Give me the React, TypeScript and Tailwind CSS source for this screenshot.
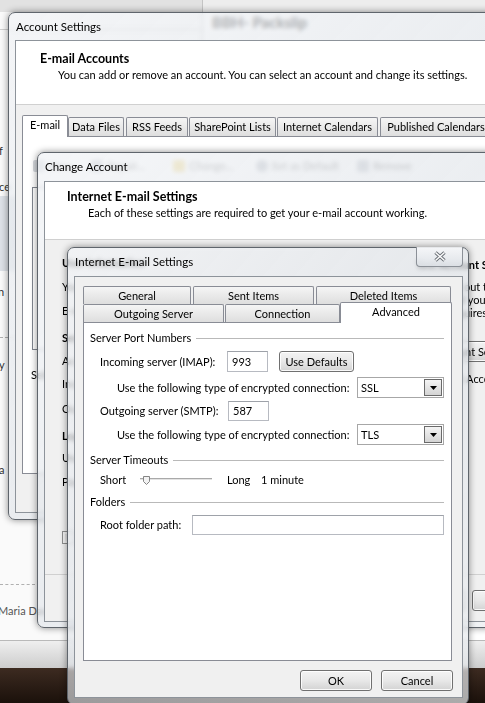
import React from "react"

type Kids = { children?: React.ReactNode }

function WinButton({ label, className = "" }: { label: string; className?: string }) {
  return (
    <div
      className={`flex shrink-0 items-center whitespace-nowrap rounded-[3px] border border-[#707070] bg-linear-to-b from-[#f3f3f3] via-[#e8e8e8] to-[#d3d3d3] shadow-[inset_0_0_0_1px_rgba(255,255,255,0.85)] ${className}`}
    >
      {label}
    </div>
  )
}

function Tab({ label, className = "" }: { label: string; className?: string }) {
  return (
    <div
      className={`flex shrink-0 items-center justify-center whitespace-nowrap rounded-t-[2px] border border-b-0 border-[#898c95] bg-linear-to-b from-[#f5f5f5] to-[#dedede] ${className}`}
    >
      {label}
    </div>
  )
}

function TextBox({ value = "", className = "" }: { value?: string; className?: string }) {
  return (
    <div
      className={`flex shrink-0 items-center border border-[#b7bac1] border-t-[#9ea2a9] bg-white pl-[4px] ${className}`}
    >
      {value}
    </div>
  )
}

function Combo({ value }: { value: string }) {
  return (
    <div className="flex h-[21px] w-[87px] shrink-0 items-center justify-between border border-[#a7a7a7] bg-white pl-[3px] pr-[1px]">
      <span>{value}</span>
      <div className="flex h-[17px] w-[18px] items-center justify-center border border-[#6a6a6a] bg-linear-to-b from-[#f4f4f4] to-[#d4d4d4]">
        <svg width="7" height="4" viewBox="0 0 7 4">
          <path d="M0 0H7L3.5 4Z" fill="#000" />
        </svg>
      </div>
    </div>
  )
}

function GroupHeader({ label, className = "" }: { label: string; className?: string }) {
  return (
    <div className={`flex h-[16px] items-center ${className}`}>
      <span className="whitespace-nowrap">{label}</span>
      <div className="ml-[5px] h-px flex-1 bg-[#b9b9b9]" />
    </div>
  )
}

function CheckBox() {
  return (
    <div className="h-[13px] w-[13px] shrink-0 border border-[#8e8f8f] bg-linear-to-br from-[#dcdcdc] to-[#f8f8f8] shadow-[inset_0_0_0_2px_#f4f4f4]" />
  )
}

function CloseBox() {
  return (
    <div className="-mt-px mr-[5px] ml-auto flex h-[20px] w-[47px] items-center justify-center self-start rounded-b-[4px] border border-t-0 border-[#8b9097] bg-linear-to-b from-[#f6f7f9]/90 to-[#dde1e6]/90">
      <svg width="14" height="11" viewBox="0 0 14 11">
        <path d="M2.5 1.5L11.5 9.5M11.5 1.5L2.5 9.5" stroke="#6b7077" strokeWidth="3.4" />
        <path d="M2.5 1.5L11.5 9.5M11.5 1.5L2.5 9.5" stroke="#fdfdfd" strokeWidth="1.5" />
      </svg>
    </div>
  )
}

function Frame({
  className = "",
  title,
  titleClass = "h-[28px]",
  clientClass = "",
  close = false,
  children,
}: Kids & { className?: string; title: string; titleClass?: string; clientClass?: string; close?: boolean }) {
  return (
    <div
      className={`absolute flex flex-col rounded-[7px] border border-[#5f656c] bg-linear-to-br from-[#f0f2f5]/70 via-[#e1e5ea]/65 to-[#eaedf0]/70 shadow-[0_0_7px_rgba(0,0,0,0.45)] backdrop-blur-[2px] ${className}`}
    >
      <div className={`flex shrink-0 ${titleClass}`}>
        <span className="self-center pl-[7px] text-[11.5px] whitespace-nowrap">{title}</span>
        {close && <CloseBox />}
      </div>
      <div className={`flex min-h-0 flex-1 flex-col overflow-hidden border border-[#8d939a] bg-[#f0f0f0] ${clientClass}`}>
        {children}
      </div>
    </div>
  )
}

function OutlookBehind() {
  return (
    <div className="flex h-full flex-col">
      <div className="flex h-[12px] shrink-0 bg-[#e2e2e2]">
        <div className="w-[203px] border-r border-[#c4c4c4]" />
        <div className="flex-1 bg-[#ededed]" />
      </div>
      <div className="flex h-[628px] shrink-0 bg-white">
        <div className="w-[203px] border-r border-[#c4c4c4] bg-[#fafafa] leading-[14px] text-[#333]">
          <div className="h-[18px] border-b border-[#cfcfcf]" />
          <div className="mt-[114px] h-[14px] -ml-[1px]">f</div>
          <div className="mt-[22px] h-[14px] -ml-[1px]">ce</div>
          <div className="mt-[2px] h-[75px] bg-[#dde1e7]" />
          <div className="mt-[14px] h-[14px] -ml-[2px]">n</div>
          <div className="mt-[38px] h-0 border-t border-dashed border-[#b0b0b0]" />
          <div className="mt-[20px] h-[14px] -ml-[1px]">y</div>
          <div className="mt-[91px] h-[14px] -ml-[1px]">a</div>
          <div className="mt-[107px] h-0 w-[35px] border-t border-dashed border-[#b0b0b0]" />
          <div className="mt-[19px] h-[14px] -ml-[2px] whitespace-nowrap text-[#555]">Maria Davis</div>
        </div>
        <div className="flex-1 pl-[9px]">
          <div className="text-[15px] leading-[20px] font-bold text-[#2e2e2e]">BBH- Packslip</div>
        </div>
      </div>
      <div className="h-[28px] shrink-0 border-t border-[#b9b9b9] bg-linear-to-b from-[#efefef] to-[#cdcdcd]" />
      <div className="flex-1 bg-linear-to-b from-[#3d2b21] to-[#1b110b]" />
    </div>
  )
}

function ToolIcon({ color }: { color: string }) {
  return <div className={`h-[12px] w-[12px] shrink-0 rounded-[2px] ${color}`} />
}

function AccountSettings() {
  return (
    <Frame
      className="left-[8px] top-[12px] h-[508px] w-[500px]"
      title="Account Settings"
      titleClass="h-[27px]"
      clientClass="mx-[6px] mb-[6px]"
    >
      <div className="h-[64px] shrink-0 border-b border-[#d0d0d0] bg-white pt-[10px] pl-[24px]">
        <div className="text-[12.5px] font-bold">E-mail Accounts</div>
        <div className="pl-[18px] whitespace-nowrap">
          You can add or remove an account. You can select an account and change its settings.
        </div>
      </div>
      <div className="pt-[10px] pl-[6px]">
        <div className="flex h-[21px] items-end">
          <div className="relative z-10 -mb-px flex h-[22px] w-[46px] shrink-0 items-start justify-center rounded-t-[2px] border border-b-0 border-[#898c95] bg-white pt-[1px]">
            E-mail
          </div>
          <Tab label="Data Files" className="h-[19px] w-[56px]" />
          <Tab label="RSS Feeds" className="ml-[2px] h-[19px] w-[62px]" />
          <Tab label="SharePoint Lists" className="ml-[1px] h-[19px] w-[87px]" />
          <Tab label="Internet Calendars" className="ml-[1px] h-[19px] w-[101px]" />
          <Tab label="Published Calendars" className="ml-[2px] h-[19px] w-[112px]" />
        </div>
        <div className="h-[338px] w-[490px] border border-[#898c95] bg-white">
          <div className="mt-[19px] flex h-[20px] items-center pl-[10px] text-[#8a8a8a]">
            <ToolIcon color="bg-[#d4d7dc]" />
            <span className="ml-[4px]">New...</span>
            <ToolIcon color="ml-[12px] bg-[#cdd0d6]" />
            <span className="ml-[4px]">Repair...</span>
            <ToolIcon color="ml-[28px] bg-[#efd98f]" />
            <span className="ml-[4px]">Change...</span>
            <ToolIcon color="ml-[22px] rounded-full bg-[#c2c6cc]" />
            <span className="ml-[4px]">Set as Default</span>
            <ToolIcon color="ml-[18px] bg-[#c8cbd1]" />
            <span className="ml-[4px]">Remove</span>
          </div>
          <div className="mt-[11px] ml-[9px] h-[163px] w-[470px] border border-[#828790] bg-white" />
          <div className="mt-[17px] pl-[8px] whitespace-nowrap">
            Selected account delivers new messages to the following location:
          </div>
        </div>
      </div>
    </Frame>
  )
}

function ChangeAccount() {
  return (
    <Frame
      className="left-[37px] top-[152px] h-[476px] w-[460px]"
      title="Change Account"
      clientClass="mx-[6px] mb-[5px]"
    >
      <div className="h-[58px] shrink-0 border-b border-[#d0d0d0] bg-white pt-[7px] pl-[22px]">
        <div className="text-[12.5px] font-bold">Internet E-mail Settings</div>
        <div className="pl-[21px] whitespace-nowrap">Each of these settings are required to get your e-mail account working.</div>
      </div>
      <div className="flex h-[334px] shrink-0">
        <div className="w-[359px] shrink-0 pl-[17px] whitespace-nowrap">
          <div className="mt-[15px] h-[16px] font-bold">User Information</div>
          <div className="mt-[8px] h-[16px]">Your Name:</div>
          <div className="mt-[8px] h-[16px]">E-mail Address:</div>
          <div className="mt-[11px] h-[16px] font-bold">Server Information</div>
          <div className="mt-[7px] h-[16px]">Account Type:</div>
          <div className="mt-[7px] h-[16px]">Incoming mail server:</div>
          <div className="mt-[9px] h-[16px]">Outgoing mail server (SMTP):</div>
          <div className="mt-[11px] h-[16px] font-bold">Logon Information</div>
          <div className="mt-[6px] h-[16px]">User Name:</div>
          <div className="mt-[8px] h-[16px]">Password:</div>
          <div className="mt-[41px] flex h-[13px] items-center gap-[5px]">
            <CheckBox />
            <span>Require logon using Secure Password Authentication (SPA)</span>
          </div>
        </div>
        <div className="w-[200px] shrink-0 pl-[4px] whitespace-nowrap">
          <div className="mt-[17px] ml-[8px] h-[16px] font-bold">Test Account Settings</div>
          <div className="mt-[7px] leading-[13px]">
            <div>After filling out the information on this screen, we</div>
            <div>recommend you test your account by clicking the button</div>
            <div>below. (Requires network connection)</div>
          </div>
          <WinButton
            label="Test Account Settings ..."
            className="mt-[22px] -ml-[3px] h-[21px] w-[150px] justify-start pl-[7px]"
          />
          <div className="mt-[9px] flex h-[16px] items-center gap-[5px] pl-[18px]">
            <CheckBox />
            <span>Test Account Settings by clicking the Next button</span>
          </div>
        </div>
      </div>
      <div className="flex flex-1 gap-[7px] border-t border-[#d0d0d0] pt-[15px] pl-[345px]">
        <WinButton label="< Back" className="h-[21px] w-[75px] justify-center" />
        <WinButton label="Next >" className="h-[21px] w-[75px] justify-center" />
      </div>
    </Frame>
  )
}

function InternetSettings() {
  return (
    <Frame
      className="left-[67px] top-[247px] h-[458px] w-[402px]"
      title="Internet E-mail Settings"
      clientClass="ml-[6px] mr-[5px] mb-[6px]"
      close
    >
      <div className="pt-[9px] pl-[8px]">
        <div className="flex h-[18px] gap-[2px]">
          <Tab label="General" className="h-[18px] w-[108px]" />
          <Tab label="Sent Items" className="h-[18px] w-[121px]" />
          <Tab label="Deleted Items" className="h-[18px] w-[135px]" />
        </div>
        <div className="relative z-10 flex h-[18px] items-end">
          <Tab label="Outgoing Server" className="mr-[1px] h-[18px] w-[141px]" />
          <Tab label="Connection" className="h-[18px] w-[115px]" />
          <div className="-mb-px flex h-[21px] w-[112px] shrink-0 justify-center rounded-t-[2px] border border-b-0 border-[#898c95] bg-white pt-[1px]">
            Advanced
          </div>
        </div>
        <div className="h-[339px] w-[369px] border border-[#898c95] bg-white pr-[7px] pl-[6px]">
          <GroupHeader label="Server Port Numbers" className="mt-[7px]" />
          <div className="mt-[5px] flex h-[21px] items-center pl-[10px]">
            <span className="w-[127px] shrink-0 whitespace-nowrap">Incoming server (IMAP):</span>
            <TextBox value="993" className="h-[21px] w-[41px]" />
            <WinButton label="Use Defaults" className="ml-[11px] h-[21px] w-[75px] justify-center" />
          </div>
          <div className="mt-[5px] flex h-[21px] items-center pl-[27px]">
            <span className="w-[240px] shrink-0 whitespace-nowrap">Use the following type of encrypted connection:</span>
            <Combo value="SSL" />
          </div>
          <div className="mt-[3px] flex h-[20px] items-center pl-[10px]">
            <span className="w-[128px] shrink-0 whitespace-nowrap">Outgoing server (SMTP):</span>
            <TextBox value="587" className="h-[20px] w-[41px]" />
          </div>
          <div className="mt-[3px] flex h-[21px] items-center pl-[27px]">
            <span className="w-[240px] shrink-0 whitespace-nowrap">Use the following type of encrypted connection:</span>
            <Combo value="TLS" />
          </div>
          <GroupHeader label="Server Timeouts" className="mt-[7px]" />
          <div className="mt-[4px] flex h-[16px] items-center pl-[10px]">
            <span className="w-[40px] shrink-0">Short</span>
            <svg width="72" height="12" viewBox="0 0 72 12" className="shrink-0">
              <rect x="0" y="4" width="72" height="1" fill="#a9a9a9" />
              <rect x="0" y="5" width="72" height="1" fill="#e3e3e3" />
              <path d="M3.5 2.5H9.5V7.5L6.5 10.5L3.5 7.5Z" fill="#f2f2f2" stroke="#858585" />
            </svg>
            <span className="ml-[15px] w-[34px] shrink-0">Long</span>
            <span className="whitespace-nowrap">1 minute</span>
          </div>
          <GroupHeader label="Folders" className="mt-[6px]" />
          <div className="mt-[5px] flex h-[20px] items-center pl-[10px]">
            <span className="w-[92px] shrink-0 whitespace-nowrap">Root folder path:</span>
            <TextBox className="h-[20px] flex-1" />
          </div>
        </div>
        <div className="mt-[9px] flex gap-[9px] pl-[217px]">
          <WinButton label="OK" className="h-[21px] w-[72px] justify-center" />
          <WinButton label="Cancel" className="h-[21px] w-[72px] justify-center" />
        </div>
      </div>
    </Frame>
  )
}

export default function App() {
  return (
    <div className="relative h-[703px] w-[485px] overflow-hidden bg-white font-['Lato','Open_Sans',sans-serif] text-[11px] leading-[16px] text-black">
      <OutlookBehind />
      <AccountSettings />
      <ChangeAccount />
      <InternetSettings />
    </div>
  )
}
